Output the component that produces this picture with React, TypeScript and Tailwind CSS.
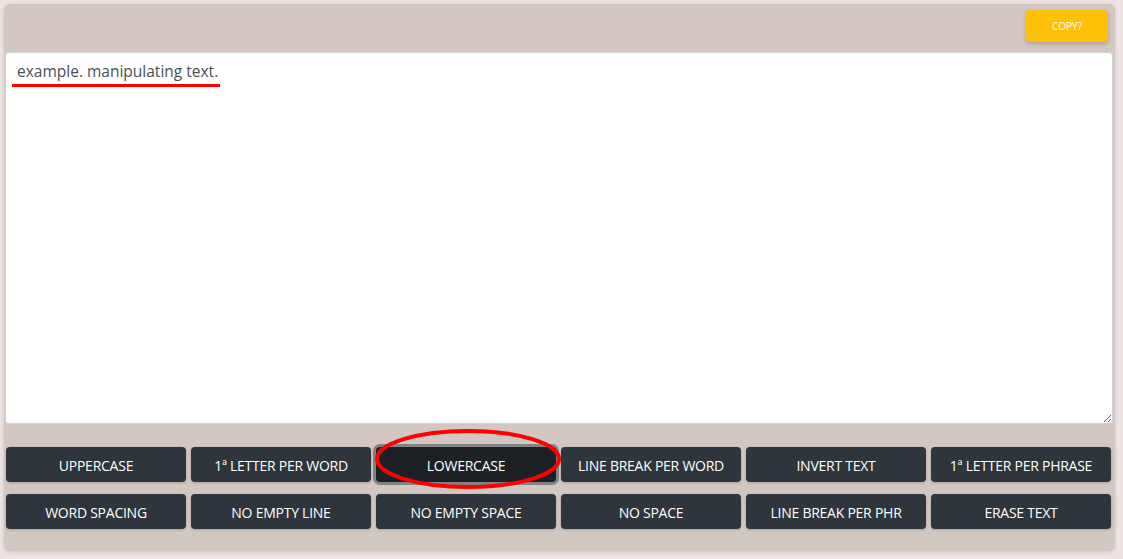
const actions = [
  "UPPERCASE",
  "1ª LETTER PER WORD",
  "LOWERCASE",
  "LINE BREAK PER WORD",
  "INVERT TEXT",
  "1ª LETTER PER PHRASE",
  "WORD SPACING",
  "NO EMPTY LINE",
  "NO EMPTY SPACE",
  "NO SPACE",
  "LINE BREAK PER PHR",
  "ERASE TEXT",
];

export default function App() {
  return (
    <div
      className="relative min-h-screen bg-[#ece5e4] p-1"
      style={{ fontFamily: '"Open Sans", "Noto Sans", sans-serif' }}
    >
      <div className="w-[1111px] h-[547px] bg-[#d3c7c2] rounded-md shadow-[0_1px_4px_rgba(0,0,0,0.15)] px-px pt-[6px]">
        <div className="flex justify-end pr-[6px]">
          <button className="w-[82px] h-8 rounded bg-[#ffc107] text-white text-[10px] shadow-[0_2px_4px_rgba(0,0,0,0.2)]">
            COPY?
          </button>
        </div>
        <textarea
          defaultValue="example. manipulating text."
          className="block mt-[10px] w-[1108px] h-[372px] bg-white border border-[#ced4da] rounded pl-[11px] pr-3 py-[6px] text-[15.5px] leading-6 text-[#495057] outline-none"
        />
        <div className="grid grid-cols-[repeat(6,180px)] gap-x-[5px] gap-y-3 ml-px mt-[23px]">
          {actions.map((a) => (
            <button
              key={a}
              className={
                a === "LOWERCASE"
                  ? "h-[35px] pt-px rounded bg-[#1d2126] text-white text-[14px] tracking-[-0.25px] shadow-[0_0_0_3px_rgba(110,114,118,0.8)]"
                  : "h-[35px] pt-px rounded bg-[#2e353c] text-white text-[14px] tracking-[-0.25px] shadow-[0_1px_3px_rgba(0,0,0,0.2)]"
              }
            >
              {a}
            </button>
          ))}
        </div>
      </div>

      {/* annotations */}
      <div className="absolute left-[12px] top-[84px] w-[208px] h-[3px] bg-[#ff0000]" />
      <svg
        className="absolute left-[373px] top-[429px]"
        width="192"
        height="62"
        viewBox="0 0 192 62"
      >
        <ellipse
          cx="95"
          cy="30"
          rx="91"
          ry="28"
          fill="none"
          stroke="#ff0000"
          strokeWidth="4"
        />
      </svg>
    </div>
  );
}
